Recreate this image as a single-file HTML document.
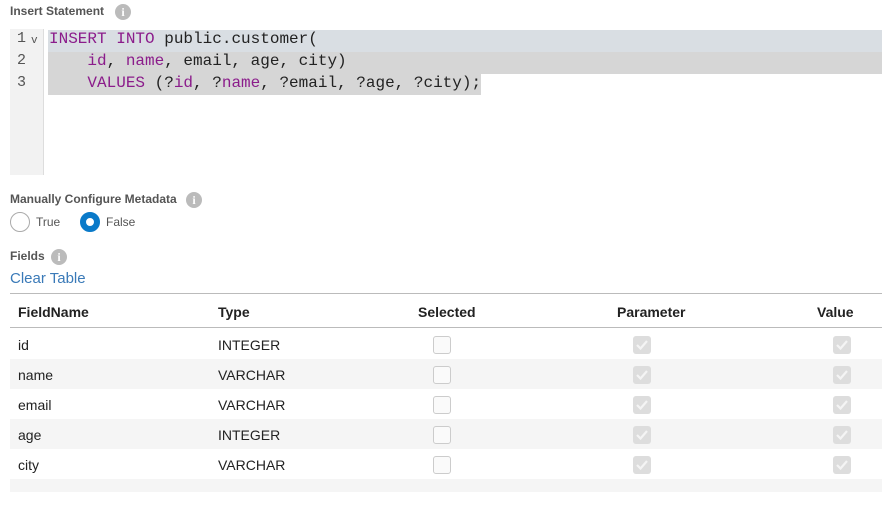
<!DOCTYPE html>
<html><head><style>
body{margin:0;width:882px;height:519px;background:#fff;font-family:"Liberation Sans",sans-serif;position:relative;overflow:hidden}
.lbl{position:absolute;left:10px;font-size:12px;font-weight:bold;color:#555}
.info{position:absolute;width:16px;height:16px;border-radius:50%;background:#bbb;color:#fff;font:bold 12px "Liberation Serif",serif;text-align:center;line-height:16px}
.ed{position:absolute;left:10px;top:29px;width:872px;height:146px;background:#fff}
.gut{position:absolute;left:0;top:0;width:33px;height:146px;background:#f2f2f2;border-right:1px solid #ddd}
.ln{position:absolute;font:16px "Liberation Mono",monospace;color:#222;white-space:pre}
.k{color:#8b1c8b}
.cb{position:absolute;width:16px;height:16px;border:1px solid #ccc;border-radius:3px;background:#fafafa}
.ck{position:absolute;width:18px;height:18px;border-radius:3px;background:#ddd}
.ck svg{position:absolute;left:2px;top:2px}
.t{position:absolute;font-size:14px;color:#222}
.h{position:absolute;font-size:14px;font-weight:bold;color:#222}
</style></head><body>
<div class="lbl" style="top:4px">Insert Statement</div><div class="info" style="left:115px;top:4px">i</div>
<div class="ed">
<div style="position:absolute;left:0;top:1px;width:33px;height:21px;background:#e4ecf4"></div>
<div style="position:absolute;left:38px;top:1px;width:834px;height:22px;background:#d9dee3"></div>
<div style="position:absolute;left:38px;top:23px;width:834px;height:22px;background:#d6d6d6"></div>
<div style="position:absolute;left:38px;top:45px;width:433px;height:21px;background:#d6d6d6"></div>
<div class="gut"></div>
<div class="ln" style="left:7px;top:1px;color:#555;font-size:15px">1</div><div class="ln" style="left:21px;top:6px;font-size:11px;color:#555">v</div>
<div class="ln" style="left:7px;top:23px;color:#555;font-size:15px">2</div>
<div class="ln" style="left:7px;top:45px;color:#555;font-size:15px">3</div>
<div class="ln" style="left:39px;top:1px"><span class="k">INSERT INTO</span> public.customer(</div>
<div class="ln" style="left:39px;top:23px">    <span class="k">id</span>, <span class="k">name</span>, email, age, city)</div>
<div class="ln" style="left:39px;top:45px">    <span class="k">VALUES</span> (?<span class="k">id</span>, ?<span class="k">name</span>, ?email, ?age, ?city);</div>
</div>
<div class="lbl" style="top:192px">Manually Configure Metadata</div><div class="info" style="left:186px;top:192px">i</div>
<div style="position:absolute;left:10px;top:212px;width:18px;height:18px;border:1px solid #aaa;border-radius:50%"></div>
<div style="position:absolute;left:36px;top:215px;font-size:12px;color:#555">True</div>
<div style="position:absolute;left:80px;top:212px;width:8px;height:8px;border:6px solid #0a7ac9;border-radius:50%;background:#fff"></div>
<div style="position:absolute;left:106px;top:215px;font-size:12px;color:#555">False</div>
<div class="lbl" style="top:249px">Fields</div><div class="info" style="left:51px;top:249px">i</div>
<div style="position:absolute;left:10px;top:270px;font-size:15px;color:#3a7ab8">Clear Table</div>
<div style="position:absolute;left:10px;top:293px;width:872px;height:1px;background:#bbb"></div>
<div style="position:absolute;left:10px;top:327px;width:872px;height:1px;background:#bbb"></div>
<div class="h" style="left:18px;top:304px">FieldName</div>
<div class="h" style="left:218px;top:304px">Type</div>
<div class="h" style="left:418px;top:304px">Selected</div>
<div class="h" style="left:617px;top:304px">Parameter</div>
<div class="h" style="left:817px;top:304px">Value</div>
<div style="position:absolute;left:10px;top:359px;width:872px;height:30px;background:#f5f5f5"></div>
<div style="position:absolute;left:10px;top:419px;width:872px;height:30px;background:#f5f5f5"></div>
<div style="position:absolute;left:10px;top:479px;width:872px;height:13px;background:#f5f5f5"></div>
<div class="t" style="left:18px;top:337px">id</div><div class="t" style="left:218px;top:337px">INTEGER</div>
<div class="t" style="left:18px;top:367px">name</div><div class="t" style="left:218px;top:367px">VARCHAR</div>
<div class="t" style="left:18px;top:397px">email</div><div class="t" style="left:218px;top:397px">VARCHAR</div>
<div class="t" style="left:18px;top:427px">age</div><div class="t" style="left:218px;top:427px">INTEGER</div>
<div class="t" style="left:18px;top:457px">city</div><div class="t" style="left:218px;top:457px">VARCHAR</div>
<div class="cb" style="left:433px;top:336px"></div><div class="cb" style="left:433px;top:366px"></div><div class="cb" style="left:433px;top:396px"></div><div class="cb" style="left:433px;top:426px"></div><div class="cb" style="left:433px;top:456px"></div>
<div class="ck" style="left:633px;top:336px"><svg width="14" height="14"><path d="M2 7l3.5 3.5L12 3" stroke="#f4f4f4" stroke-width="2.2" fill="none"/></svg></div>
<div class="ck" style="left:633px;top:366px"><svg width="14" height="14"><path d="M2 7l3.5 3.5L12 3" stroke="#f4f4f4" stroke-width="2.2" fill="none"/></svg></div>
<div class="ck" style="left:633px;top:396px"><svg width="14" height="14"><path d="M2 7l3.5 3.5L12 3" stroke="#f4f4f4" stroke-width="2.2" fill="none"/></svg></div>
<div class="ck" style="left:633px;top:426px"><svg width="14" height="14"><path d="M2 7l3.5 3.5L12 3" stroke="#f4f4f4" stroke-width="2.2" fill="none"/></svg></div>
<div class="ck" style="left:633px;top:456px"><svg width="14" height="14"><path d="M2 7l3.5 3.5L12 3" stroke="#f4f4f4" stroke-width="2.2" fill="none"/></svg></div>
<div class="ck" style="left:833px;top:336px"><svg width="14" height="14"><path d="M2 7l3.5 3.5L12 3" stroke="#f4f4f4" stroke-width="2.2" fill="none"/></svg></div>
<div class="ck" style="left:833px;top:366px"><svg width="14" height="14"><path d="M2 7l3.5 3.5L12 3" stroke="#f4f4f4" stroke-width="2.2" fill="none"/></svg></div>
<div class="ck" style="left:833px;top:396px"><svg width="14" height="14"><path d="M2 7l3.5 3.5L12 3" stroke="#f4f4f4" stroke-width="2.2" fill="none"/></svg></div>
<div class="ck" style="left:833px;top:426px"><svg width="14" height="14"><path d="M2 7l3.5 3.5L12 3" stroke="#f4f4f4" stroke-width="2.2" fill="none"/></svg></div>
<div class="ck" style="left:833px;top:456px"><svg width="14" height="14"><path d="M2 7l3.5 3.5L12 3" stroke="#f4f4f4" stroke-width="2.2" fill="none"/></svg></div>
</body></html>
